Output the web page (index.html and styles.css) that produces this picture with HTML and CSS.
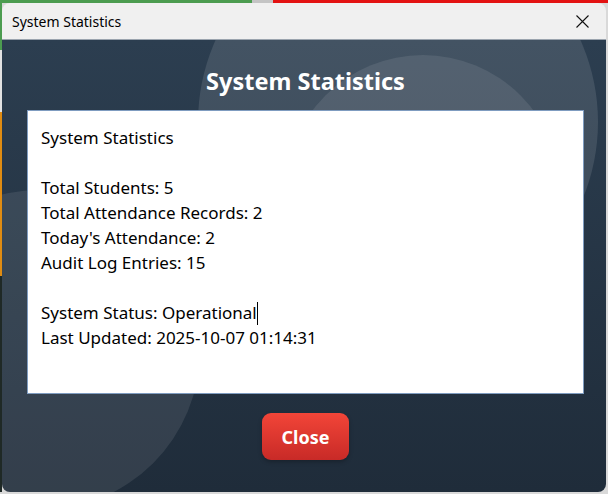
FILE: index.html
```html
<!DOCTYPE html>
<html>
<head>
<meta charset="utf-8">
<link rel="stylesheet" href="styles.css">
</head>
<body>
<div class="window">
  <div class="titlebar">
    <span class="title">System Statistics</span>
    <svg class="close-x" width="13" height="13" viewBox="0 0 13 13"><path d="M0.5 0.5 L12.5 12.5 M12.5 0.5 L0.5 12.5" stroke="#111" stroke-width="1.1" fill="none"/></svg>
  </div>
  <div class="content">
    <div class="deco deco-big"></div>
    <div class="deco deco-inner"></div>
    <div class="deco deco-left"></div>
    <h1 class="heading">System Statistics</h1>
    <div class="stats-box"><div class="stats-text">System Statistics

Total Students: 5
Total Attendance Records: 2
Today's Attendance: 2
Audit Log Entries: 15

System Status: Operational<span class="caret"></span>
Last Updated: 2025-10-07 01:14:31</div></div>
    <div class="actions"><button class="btn-close">Close</button></div>
  </div>
</div>
</body>
</html>
```
FILE: styles.css
```css
* { box-sizing: border-box; }
html, body { margin: 0; padding: 0; }
body {
  width: 608px;
  height: 494px;
  overflow: hidden;
  font-family: "Noto Sans", "Open Sans", sans-serif;
  background-color: #d9d9d9;
  background-image:
    linear-gradient(to right, #4c9c50 0 252px, #c4c4c4 252px 273px, #e31212 273px),
    linear-gradient(to bottom, #4c9c50 0 50px, #e2e2e2 50px 112px, #e08c12 112px 276px, #1f2926 276px 492px, #d9d9d9 492px);
  background-size: 100% 3px, 2px 100%;
  background-position: 0 0, 0 0;
  background-repeat: no-repeat;
  padding: 3px 2px 2px 2px;
}
.window {
  width: 604px;
  height: 489px;
  border-radius: 8px;
  overflow: hidden;
  display: flex;
  flex-direction: column;
}
.titlebar {
  height: 37px;
  flex: none;
  background: #f0f0f0;
  border-bottom: 1px solid #9ba4ae;
  display: flex;
  align-items: center;
  justify-content: space-between;
  padding: 0 17px 0 10px;
}
.title {
  font-size: 14px;
  color: #000;
}
.close-x { display: block; }
.content {
  position: relative;
  flex: 1;
  overflow: hidden;
  background: linear-gradient(to bottom, #2c3e50 0%, #1f2c3a 100%);
  display: flex;
  flex-direction: column;
  padding: 25px 22px 0 25px;
}
.deco {
  position: absolute;
  border-radius: 50%;
  background: rgba(255, 255, 255, 0.11);
  pointer-events: none;
}
.deco-big { width: 400px; height: 400px; left: 196px; top: -118px; }
.deco-inner { width: 276px; height: 276px; left: 283px; top: 15px; background: rgba(255,255,255,0.09); }
.deco-left { width: 320px; height: 320px; left: -122px; top: 150px; background: rgba(255,255,255,0.09); }
.heading {
  position: relative;
  margin: 0 0 13px 0;
  font-size: 23.5px;
  line-height: 32px;
  font-weight: 700;
  color: #fff;
  text-align: center;
}
.stats-box {
  position: relative;
  height: 284px;
  background: #fff;
  border: 1px solid #7f9cc0;
  padding: 14px 13px;
}
.stats-text {
  white-space: pre-line;
  font-size: 17px;
  line-height: 25px;
  color: #000;
}
.caret {
  display: inline-block;
  width: 0;
  height: 23px;
  border-left: 1px solid #000;
  vertical-align: -6px;
}
.actions {
  position: relative;
  display: flex;
  justify-content: center;
  margin-top: 19px;
}
.btn-close {
  width: 87px;
  height: 47px;
  border: none;
  border-radius: 9px;
  background: linear-gradient(to bottom, #f24538, #c82a27);
  color: #fff;
  font-family: "Noto Sans", sans-serif;
  font-weight: 700;
  font-size: 18px;
  box-shadow: 0 2px 4px rgba(0,0,0,0.25);
}
```
